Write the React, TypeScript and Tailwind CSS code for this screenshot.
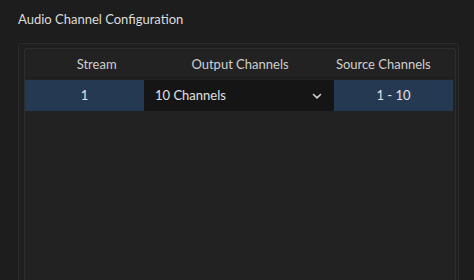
import React from 'react'

export default function App() {
  return (
    <div
      className="w-[474px] h-[280px] bg-[#1d1d1d] overflow-hidden text-[#d6d6d6]"
      style={{ fontFamily: 'Lato, "Open Sans", sans-serif' }}
    >
      {/* Title */}
      <div className="pl-[18px] pt-[10px] h-[43px] text-[13px] leading-[18px] text-[#dcdcdc]">
        Audio Channel Configuration
      </div>

      {/* Panel */}
      <div className="ml-[18px] w-[441px] h-[260px] rounded-[3px] border border-[#2b2b2b] bg-[#1f1f1f] pt-[4px] pl-[5px] pr-[2px]">
        <div className="h-full rounded-[2px] border border-[#2d2d2d] bg-[#222222]">
          {/* Header */}
          <div className="grid grid-cols-3 h-[29px] pt-[3px] items-center text-[13px] text-[#cfcfcf] border-b border-[#1c1c1c]">
            <div className="text-center">Stream</div>
            <div className="text-center">Output Channels</div>
            <div className="text-center">Source Channels</div>
          </div>

          {/* Row */}
          <div className="grid grid-cols-[119px_190px_119px] h-[31px] mt-[2px] text-[13px]">
            <div className="flex items-center justify-center bg-[#253a52] text-[#e2e2e2]">1</div>
            <div className="flex items-center justify-between bg-[#151515] rounded-[2px] pl-[11px] pr-[12px] text-[#e0e0e0]">
              <span>10 Channels</span>
              <svg width="10" height="8" viewBox="0 0 10 8" fill="none">
                <path d="M1.5 2.5 L5 5.8 L8.5 2.5" stroke="#cfcfcf" strokeWidth="1.6" strokeLinecap="round" strokeLinejoin="round" />
              </svg>
            </div>
            <div className="flex items-center justify-center bg-[#253a52] text-[#e2e2e2]">1 - 10</div>
          </div>
        </div>
      </div>
    </div>
  )
}
